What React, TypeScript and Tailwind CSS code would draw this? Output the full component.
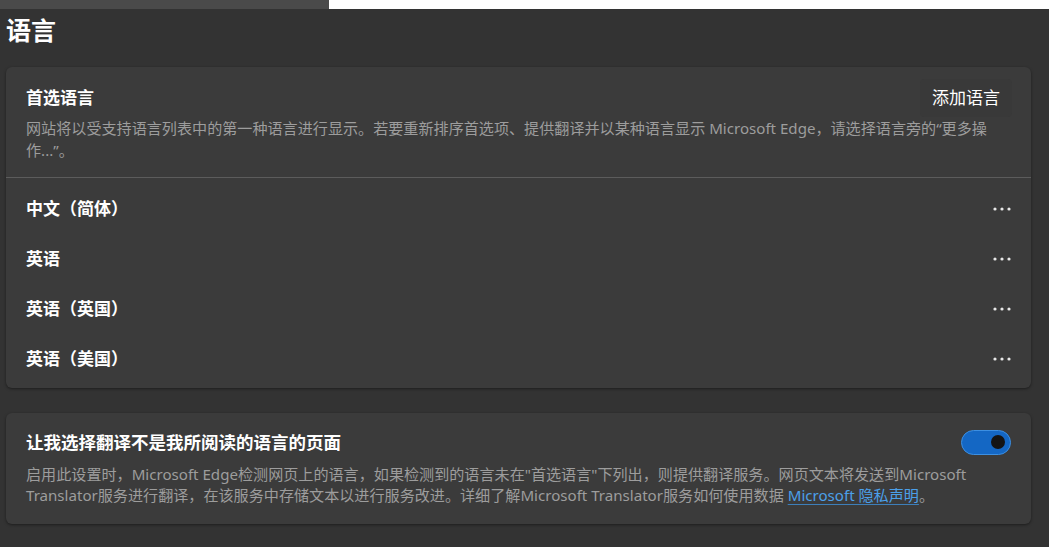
const languages = ['中文（简体）', '英语', '英语（英国）', '英语（美国）'];

function MoreIcon() {
  return (
    <svg width="18" height="4" viewBox="0 0 18 4" className="block">
      <circle cx="2" cy="2" r="1.6" fill="#e8e8e8" />
      <circle cx="9" cy="2" r="1.6" fill="#e8e8e8" />
      <circle cx="16" cy="2" r="1.6" fill="#e8e8e8" />
    </svg>
  );
}

export default function App() {
  return (
    <div
      className="w-[1049px] h-[547px] bg-[#333333] overflow-hidden"
      style={{ fontFamily: '"Noto Sans", "Noto Sans CJK SC", sans-serif' }}
    >
      {/* 顶部条 */}
      <div className="flex h-[9px]">
        <div className="w-[329px] bg-[#4a4a4a]" />
        <div className="flex-1 bg-white" />
      </div>

      <div className="pl-[6px] pr-[18px]">
        {/* 标题 */}
        <h1 className="h-[44px] flex items-center text-[25px] font-bold text-white leading-none pb-[2px]">
          语言
        </h1>

        {/* 首选语言 */}
        <div className="mt-[14px] rounded-[6px] bg-[#3b3b3b] shadow-[0_1px_3px_rgba(0,0,0,0.45)]">
          <div className="px-[20px] pt-[12px] pb-[16px]">
            <div className="flex items-center justify-between h-[38px]">
              <span className="text-[17px] font-bold text-white">首选语言</span>
              <button className="h-[38px] px-[12px] mr-[-1px] rounded-[4px] bg-[#393939] text-[17px] text-white">
                添加语言
              </button>
            </div>
            <p className="w-[968px] text-[15.1px] leading-[22px] text-[#9d9d9d]">
              网站将以受支持语言列表中的第一种语言进行显示。若要重新排序首选项、提供翻译并以某种语言显示 Microsoft Edge，请选择语言旁的“更多操作...”。
            </p>
          </div>
          <div className="h-px bg-[#5c5c5c]" />
          <div className="pt-[6px] pb-[4px]">
            {languages.map((lang) => (
              <div key={lang} className="h-[50px] flex items-center justify-between pl-[20px] pr-[20px]">
                <span className="text-[17px] font-bold text-white">{lang}</span>
                <MoreIcon />
              </div>
            ))}
          </div>
        </div>

        {/* 翻译设置 */}
        <div className="mt-[25px] rounded-[6px] bg-[#3b3b3b] shadow-[0_1px_3px_rgba(0,0,0,0.45)] px-[20px] pt-[17px] pb-[18px]">
          <div className="flex items-center justify-between h-[24px]">
            <span className="text-[17.5px] font-bold text-white">让我选择翻译不是我所阅读的语言的页面</span>
            <div className="w-[50px] h-[25px] rounded-full bg-[#1467c4] border border-[#3c8fe2] flex items-center justify-end pr-[5px]">
              <div className="w-[14px] h-[14px] rounded-full bg-[#141414]" />
            </div>
          </div>
          <p className="mt-[10px] w-[968px] text-[15.1px] leading-[21px] text-[#9d9d9d]">
            启用此设置时，Microsoft Edge检测网页上的语言，如果检测到的语言未在"首选语言"下列出，则提供翻译服务。网页文本将发送到Microsoft Translator服务进行翻译，在该服务中存储文本以进行服务改进。详细了解Microsoft Translator服务如何使用数据{' '}
            <a className="text-[#4ba0ea] underline underline-offset-[3px] decoration-[#3d7fba]">Microsoft 隐私声明</a>。
          </p>
        </div>
      </div>
    </div>
  );
}
